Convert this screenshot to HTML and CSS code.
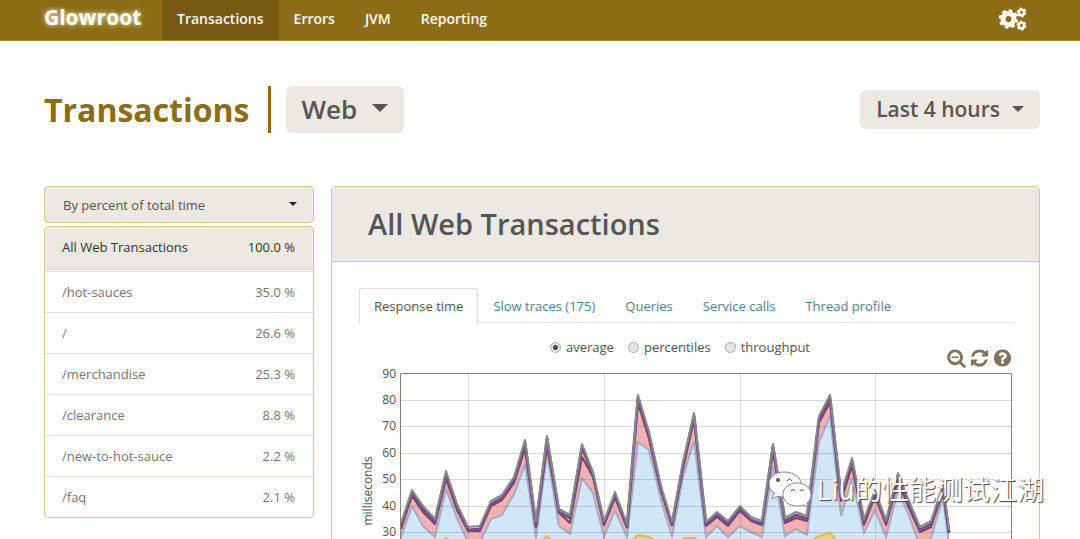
FILE: index.html
```html
<!DOCTYPE html>
<html lang="en">
<head>
<meta charset="utf-8">
<title>Glowroot</title>
<link rel="stylesheet" href="styles.css">
</head>
<body>
<header class="navbar">
  <a class="brand" href="#">Glowroot</a>
  <nav class="nav">
    <a class="nav-link active" href="#">Transactions</a>
    <a class="nav-link" href="#">Errors</a>
    <a class="nav-link" href="#">JVM</a>
    <a class="nav-link" href="#">Reporting</a>
  </nav>
  <a class="settings" href="#" aria-label="Configuration">
    <svg width="28" height="24" viewBox="0 0 28 24" fill="none" stroke="#fff">
      <circle cx="9.500" cy="12" r="5.500" stroke-width="5"/>
      <circle cx="9.500" cy="12" r="8.600" stroke-width="2.400" stroke-dasharray="3.700 3.050"/>
      <circle cx="22.500" cy="5.500" r="2.700" stroke-width="2.600"/>
      <circle cx="22.500" cy="5.500" r="4.300" stroke-width="1.400" stroke-dasharray="2.200 2.300"/>
      <circle cx="22.500" cy="18.500" r="2.700" stroke-width="2.600"/>
      <circle cx="22.500" cy="18.500" r="4.300" stroke-width="1.400" stroke-dasharray="2.200 2.300"/>
    </svg>
  </a>
</header>

<main class="page">
  <div class="title-row">
    <h1 class="title">Transactions</h1>
    <button class="pick pick-large" type="button">Web <span class="caret caret-large"></span></button>
    <button class="pick pick-range" type="button">Last 4 hours <span class="caret caret-medium"></span></button>
  </div>

  <div class="columns">
    <aside class="sidebar">
      <div class="sort">
        <select class="sort-select" aria-label="Sort order">
          <option>By percent of total time</option>
        </select>
        <span class="caret sort-caret"></span>
      </div>
      <div class="list">
        <a class="row selected" href="#"><span>All Web Transactions</span><span>100.0 %</span></a>
        <a class="row" href="#"><span>/hot-sauces</span><span>35.0 %</span></a>
        <a class="row" href="#"><span>/</span><span>26.6 %</span></a>
        <a class="row" href="#"><span>/merchandise</span><span>25.3 %</span></a>
        <a class="row" href="#"><span>/clearance</span><span>8.8 %</span></a>
        <a class="row" href="#"><span>/new-to-hot-sauce</span><span>2.2 %</span></a>
        <a class="row" href="#"><span>/faq</span><span>2.1 %</span></a>
      </div>
    </aside>

    <section class="panel">
      <h2 class="panel-title">All Web Transactions</h2>
      <div class="panel-body">
        <nav class="tabs">
          <a class="tab current" href="#">Response time</a>
          <a class="tab" href="#">Slow traces (175)</a>
          <a class="tab" href="#">Queries</a>
          <a class="tab" href="#">Service calls</a>
          <a class="tab" href="#">Thread profile</a>
        </nav>
        <div class="modes">
          <label class="mode"><input type="radio" name="mode" checked>average</label>
          <label class="mode"><input type="radio" name="mode">percentiles</label>
          <label class="mode"><input type="radio" name="mode">throughput</label>
        </div>
        <div class="tools">
          <button class="tool" type="button" aria-label="Zoom out"><svg viewBox="0 0 1792 1792"><path d="M1088 800v64q0 13-9.500 22.500t-22.500 9.500h-576q-13 0-22.500-9.500t-9.500-22.500v-64q0-13 9.500-22.500t22.500-9.500h576q13 0 22.500 9.500t9.500 22.500zm128 32q0-185-131.500-316.500t-316.500-131.500-316.500 131.500-131.500 316.500 131.500 316.500 316.500 131.500 316.500-131.500 131.500-316.500zm512 832q0 53-37.500 90.500t-90.500 37.500q-54 0-90-38l-343-342q-179 124-399 124-143 0-273.500-55.500t-225-150-150-225-55.500-273.500 55.500-273.500 150-225 225-150 273.500-55.500 273.500 55.500 225 150 150 225 55.500 273.500q0 220-124 399l343 343q37 37 37 90z"/></svg></button>
          <button class="tool" type="button" aria-label="Refresh"><svg viewBox="0 0 1792 1792"><path d="M1639 1056q0 5-1 7-64 268-268 434.500t-478 166.500q-146 0-282.500-55t-243.500-157l-129 129q-19 19-45 19t-45-19-19-45v-448q0-26 19-45t45-19h448q26 0 45 19t19 45-19 45l-137 137q71 66 161 102t187 36q134 0 250-65t186-179q11-17 53-117 8-23 30-23h192q13 0 22.500 9.500t9.500 22.500zm25-800v448q0 26-19 45t-45 19h-448q-26 0-45-19t-19-45 19-45l138-138q-148-137-349-137-134 0-250 65t-186 179q-11 17-53 117-8 23-30 23h-199q-13 0-22.500-9.500t-9.500-22.500v-7q65-268 270-434.500t480-166.500q146 0 284 55.500t245 156.500l130-129q19-19 45-19t45 19 19 45z"/></svg></button>
          <button class="tool" type="button" aria-label="Help"><svg viewBox="0 0 1792 1792"><path d="M1024 1376v-192q0-14-9-23t-23-9h-192q-14 0-23 9t-9 23v192q0 14 9 23t23 9h192q14 0 23-9t9-23zm256-672q0-88-55.500-163t-138.500-116-170-41q-243 0-371 213-15 24 8 42l132 100q7 6 19 6 16 0 25-12 53-68 86-92 34-24 86-24 48 0 85.500 26t37.500 59q0 38-20 61t-68 45q-63 28-115.500 86.500t-52.500 125.500v36q0 14 9 23t23 9h192q14 0 23-9t9-23q0-19 21.500-49.500t54.500-49.500q32-18 49-28.500t46-35 44.500-48 28-60.500 12.500-81zm384 192q0 209-103 385.500t-279.500 279.500-385.500 103-385.500-103-279.500-279.500-103-385.500 103-385.500 279.500-279.500 385.500-103 385.500 103 279.500 279.500 103 385.500z"/></svg></button>
        </div>
        <svg class="chart" viewBox="359 368 654 260" role="img" aria-label="Response time chart">
          <defs>
            <polyline id="total" points="401,523 412,490 423,506 435,519 446,471 457,504 468,527 480,526 491,501 502,495 514,477 525,440 536,522 547,436 559,509 570,515 582,444 593,472 604,521 615,492 627,524 638,395 649,432 661,486 672,522 683,462 694,413 706,522 717,512 728,521 740,506 751,517 762,521 773,444 785,518 796,512 807,516 819,416 830,395 841,494 852,458 864,519 875,490 886,520 898,473 909,501 920,527 931,521 943,485 949,530"/>
          </defs>
          <path class="area-pink" d="M401,628 V529 L412,496 423,512 435,524 446,479 457,510 468,531 480,531 491,506 502,500 514,483 525,449 536,527 547,446 559,513 570,523 582,457 593,477 604,525 615,498 627,527 638,403 649,439 661,491 672,525 683,469 694,420 706,526 717,517 728,526 740,511 751,521 762,525 773,451 785,523 796,518 807,521 819,423 830,402 841,501 852,466 864,525 875,496 886,525 898,481 909,508 920,532 931,527 943,491 949,536 V628 Z"/>
          <path class="area-blue" d="M401,628 V537 L412,506 423,526 435,537 446,489 457,518 468,542 480,542 491,519 502,515 514,494 525,464 536,538 547,453 559,526 570,534 582,478 593,493 604,537 615,510 627,537 638,442 649,450 661,500 672,537 683,477 694,441 706,537 717,526 728,537 740,526 751,532 762,537 773,466 785,536 796,529 807,535 819,442 830,416 841,516 852,478 864,533 875,510 886,537 898,490 909,516 920,546 931,538 943,497 949,545 V628 Z"/>
          <path class="area-green" d="M559,509 570,515 582,445 593,472 V479 L582,457 570,523 559,512 Z"/>
          <polyline class="line-red" points="401,529 412,496 423,512 435,524 446,479 457,510 468,531 480,531 491,506 502,500 514,483 525,449 536,527 547,446 559,513 570,523 582,457 593,477 604,525 615,498 627,527 638,403 649,439 661,491 672,525 683,469 694,420 706,526 717,517 728,526 740,511 751,521 762,525 773,451 785,523 796,518 807,521 819,423 830,402 841,501 852,466 864,525 875,496 886,525 898,481 909,508 920,532 931,527 943,491 949,532"/>
          <use class="line-purple" href="#total" y="3"/>
          <use class="line-gray" href="#total"/>
          <path class="area-yellow" d="M440,542 446,538 452,542 Z M541,542 547,536 554,542 Z M630,542 638,535 649,537 659,542 Z M681,542 684,538 695,538 697,542 Z M810,542 819,536 830,533 838,542 Z"/>
          <path class="grid" d="M401,400.500 H1012 M401,426.500 H1012 M401,453.500 H1012 M401,479.500 H1012 M401,506.500 H1012 M401,532.500 H1012 M468.500,374 V628 M604.500,374 V628 M740.500,374 V628 M875.500,374 V628"/>
          <path class="frame" d="M400.500,628 V373.500 H1011.500 V628"/>
          <g class="axis" text-anchor="end">
            <text x="396" y="378">90</text>
            <text x="396" y="404">80</text>
            <text x="396" y="430">70</text>
            <text x="396" y="457">60</text>
            <text x="396" y="483">50</text>
            <text x="396" y="510">40</text>
            <text x="396" y="536">30</text>
          </g>
          <text class="axis" text-anchor="middle" transform="translate(372 491) rotate(-90)">milliseconds</text>
        </svg>
      </div>
    </section>
  </div>
</main>

<div class="watermark">
  <svg width="46" height="38" viewBox="0 0 46 38">
    <path class="bubble" d="M17 2C8 2 2 7 2 14c0 4 2 7 5 9l-2 6 6-3c2 1 4 1 7 1 9 0 16-6 16-13S26 2 17 2Z"/>
    <path class="bubble" d="M30 13c-8 0-14 5-14 11.500S22 36 30 36c2 0 4 0 6-1l5 2-1-4c3-2 4-5 4-8.500C44 18 38 13 30 13Z"/>
    <circle cx="11" cy="10" r="2" fill="#555"/>
    <path d="M20 11q2-4 5 0M24 21q2-3 4 0M33 21q2-3 4 0" fill="none" stroke="#555"/>
  </svg>
  <span>Liu的性能测试江湖</span>
</div>
</body>
</html>
```
FILE: styles.css
```css
* { box-sizing: border-box; }

body {
  position: relative;
  height: 100vh;
  margin: 0;
  overflow: hidden;
  background: #fff;
  color: #555;
  font: 13px/20px "Open Sans", sans-serif;
}

a { color: inherit; text-decoration: none; }
button, select { font: inherit; color: inherit; }

.navbar {
  display: flex;
  height: 41px;
  padding: 0 53px 0 44px;
  align-items: stretch;
  background: #8c6c15;
  border-bottom: 1px solid #a3873f;
  color: #fff;
}
.brand {
  width: 118px;
  font-size: 21px;
  font-weight: 700;
  line-height: 35px;
  text-shadow: 0 0 5px #fff8d0;
}
.nav { display: flex; }
.nav-link {
  padding: 0 15px;
  font-size: 14px;
  font-weight: 600;
  line-height: 38px;
}
.nav-link.active { background: #755811; }
.settings { margin-left: auto; padding-top: 7px; }

.page { padding: 45px 40px 0 44px; }

.title-row { display: flex; align-items: center; }
.title {
  margin: 0;
  padding-right: 18px;
  border-right: 3px solid #8c6c15;
  color: #8c6c15;
  font-size: 32px;
  font-weight: 700;
  line-height: 47px;
}
.pick {
  display: flex;
  align-items: center;
  border: 0;
  border-radius: 6px;
  background: #ece9e2;
  font-weight: 600;
  padding: 0 16px;
}
.pick-large { margin-left: 15px; gap: 15px; font-size: 26px; line-height: 47px; }
.pick-range { margin-left: auto; gap: 12px; font-size: 21px; line-height: 39px; }

.caret {
  width: 0;
  border: 4px solid transparent;
  border-top-color: currentColor;
  border-bottom: 0;
}
.caret-medium { border-width: 6px 6px 0; margin-bottom: 2px; }
.caret-large { border-width: 8px 8px 0; margin-bottom: 3px; }

.columns {
  display: grid;
  grid-template-columns: 270fr 709fr;
  gap: 17px;
  margin-top: 53px;
  align-items: start;
}

.sort { position: relative; margin-bottom: 3px; }
.sort-select {
  display: block;
  width: 100%;
  height: 37px;
  padding: 0 18px;
  border: 1px solid #d5c797;
  border-radius: 4px;
  background: #ece9e2;
  appearance: none;
}
.sort-caret { position: absolute; top: 16px; right: 17px; color: #222; }

.list {
  overflow: hidden;
  border: 1px solid #d5c797;
  border-radius: 4px;
}
.row {
  display: flex;
  justify-content: space-between;
  padding: 10px 18px 10px 17px;
  border-top: 1px solid #e3dfd3;
  color: #777;
}
.row.selected {
  margin-bottom: 1px;
  padding-bottom: 12px;
  border-top: 0;
  border-bottom: 1px solid #ddd8cb;
  background: #ece9e2;
  color: #333;
}

.panel { border: 1px solid #d5c797; border-radius: 4px; }
.panel-title {
  margin: 0;
  padding: 0 36px;
  border-bottom: 1px solid #d5c797;
  background: #ece9e2;
  font-size: 29px;
  font-weight: 600;
  line-height: 74px;
}
.panel-body { padding: 26px 26px 27px 27px; }

.tabs { display: flex; border-bottom: 1px solid #e6e6e6; }
.tab { padding: 7px 14px 6px; border: 1px solid transparent; border-bottom: 0; color: #557f96; }
.tab.current {
  margin-bottom: -1px;
  border-color: #ddd;
  border-radius: 3px 3px 0 0;
  background: #fff;
  color: #555;
}

.modes { display: flex; justify-content: center; gap: 14px; padding: 14px 12px 0 0; }
.mode { display: flex; align-items: center; gap: 5px; }
.mode input {
  width: 11px;
  height: 11px;
  margin: 0;
  border: 1px solid #aaa;
  border-radius: 50%;
  background: #e4e4e4;
  appearance: none;
}
.mode input:checked { background: radial-gradient(circle, #444 0 2px, #e4e4e4 3px); }

.tools { display: flex; justify-content: flex-end; gap: 2px; margin-top: -9px; }
.tool { padding: 0; border: 0; background: none; }
.tool svg { display: block; width: 21px; height: 20px; fill: #80725c; }

.chart { display: block; width: 100%; overflow: visible; }
.area-pink { fill: #f2b2b2; }
.area-blue { fill: #d1e7f8; stroke: #a9a9c4; stroke-width: 2; }
.area-green { fill: #c6d3a4; }
.area-yellow { fill: #e6d676; stroke: #d3c34c; stroke-width: 2; }
.line-red, .line-purple, .line-gray { fill: none; stroke-linejoin: round; }
.line-red { stroke: #823f55; stroke-width: 2; }
.line-purple { stroke: #704f91; stroke-width: 3; }
.line-gray { stroke: #888; stroke-width: 2; }
.grid { stroke: #545454; stroke-opacity: 0.22; }
.frame { fill: none; stroke: #84827a; }
.axis { fill: #555; font-size: 12px; }

.watermark {
  position: absolute;
  right: 36px;
  bottom: 31px;
  display: flex;
  align-items: center;
  gap: 4px;
  color: #fff;
  font: 27px/38px "Noto Sans CJK SC", sans-serif;
  text-shadow: 1px 1px 1px #444;
}
.bubble { fill: #fff; stroke: #888; stroke-width: 1; }
```
